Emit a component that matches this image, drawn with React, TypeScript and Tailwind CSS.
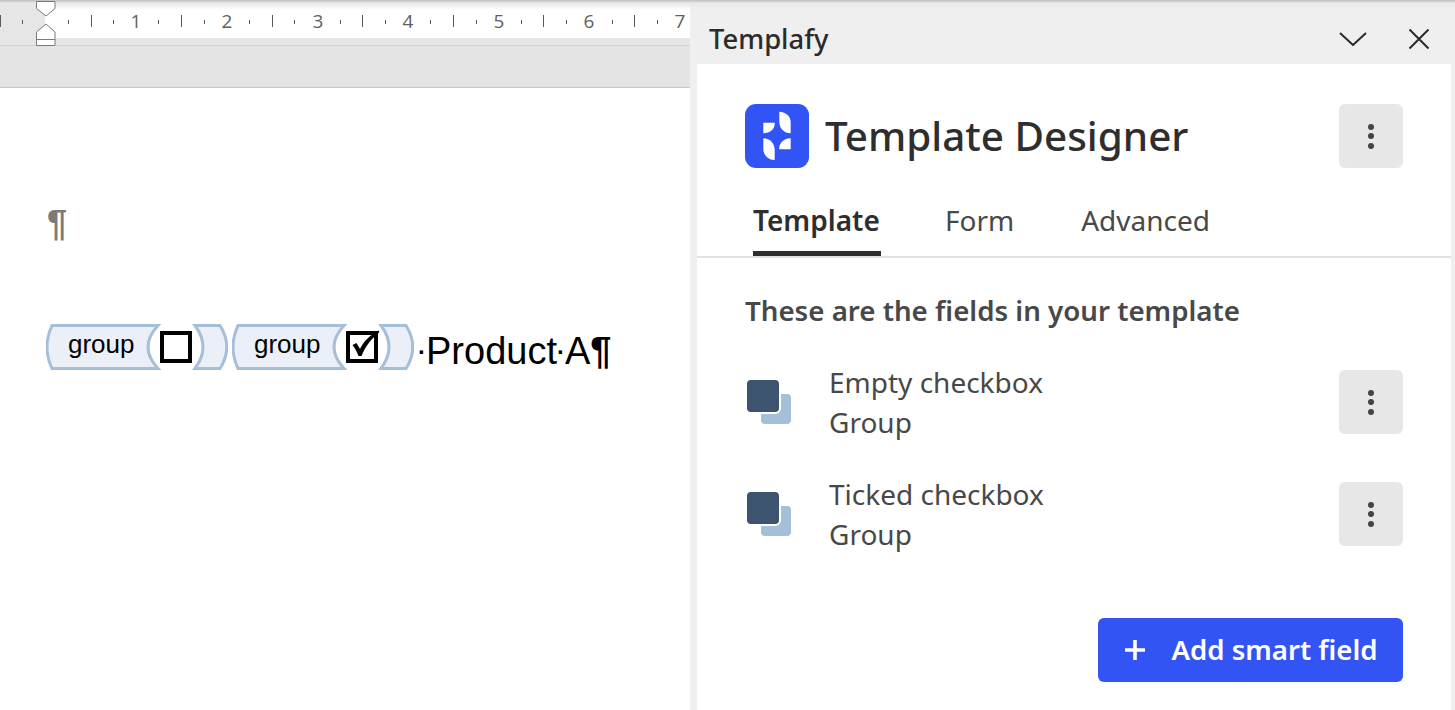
const minorTicks = [22, 68, 113, 158, 204, 249, 294, 340, 385, 430, 476, 521, 566, 612, 657];
const majorTicks = [0, 91, 181, 272, 362, 453, 543, 634];
const rulerDigits = [
  { x: 136, label: "1" },
  { x: 227, label: "2" },
  { x: 318, label: "3" },
  { x: 408, label: "4" },
  { x: 499, label: "5" },
  { x: 589, label: "6" },
  { x: 680, label: "7" }
];

function Ruler() {
  return (
    <div className="relative h-[46px] border-b border-[#d4d4d4] bg-[#e6e6e6]">
      <svg width="690" height="45" viewBox="0 0 690 45" className="block">
        <rect x="45" y="0" width="645" height="38" fill="#ffffff" />
        {minorTicks.map((x) => (
          <rect key={x} x={x} y="20" width="1" height="4" fill="#5a5a5a" />
        ))}
        {majorTicks.map((x) => (
          <rect key={x} x={x} y="15" width="1" height="12" fill="#5a5a5a" />
        ))}
        {rulerDigits.map((digit) => (
          <text key={digit.label} x={digit.x} y="28" textAnchor="middle" fontSize="19" fill="#5f5f5f" fontFamily="'Open Sans', sans-serif">
            {digit.label}
          </text>
        ))}
      </svg>
      {/* indent markers sit on top of the window shadow */}
      <svg width="21" height="46" viewBox="0 0 21 46" className="absolute left-[35px] top-0 z-10">
        <path d="M1.5 1.5H20V8.5L11 16L1.5 8.5Z" fill="#ffffff" stroke="#7a7a7a" />
        <path d="M1.5 32L11 24L20 32V45.5H1.5Z" fill="#ffffff" stroke="#7a7a7a" />
        <path d="M1.5 39.5H20" stroke="#7a7a7a" />
      </svg>
    </div>
  );
}

function CheckMark() {
  return (
    <svg width="36" height="34" viewBox="0 0 36 34" className="block">
      <rect x="3" y="3" width="28" height="28" fill="#ffffff" stroke="#000000" strokeWidth="4" />
      <path d="M7.5 15L11.5 13L15 19C19 11 25 5 33.5 0.5L34.5 2C26 9 20 17 16.5 26H13.5C12 22 10 18 7.5 15Z" fill="#000000" />
    </svg>
  );
}

function GroupTag({ ticked }: { ticked: boolean }) {
  return (
    <div className="relative h-[46px] w-[182px] shrink-0">
      <svg width="182" height="46" viewBox="0 0 182 46" className="absolute inset-0">
        <path d="M6 1.5Q-4 23 6 44.5H112Q92 23 112 1.5Z" fill="#ebf0f8" stroke="#a5bfd8" strokeWidth="3" />
        <path d="M149 1.5H174Q187.5 23 174 44.5H149Q165 23 149 1.5Z" fill="#ebf0f8" stroke="#a5bfd8" strokeWidth="3" />
      </svg>
      <div className="relative flex h-full items-center pl-[22px] font-['Liberation_Sans',sans-serif] text-[26px] leading-none text-black">
        <span className="mb-[6px] w-[91px]">group</span>
        <div className="size-[34px]">
          {ticked ? (
            <CheckMark />
          ) : (
            <div className="size-[34px] p-[1px]">
              <div className="size-[32px] border-4 border-black bg-white" />
            </div>
          )}
        </div>
      </div>
    </div>
  );
}

function Document() {
  return (
    <div className="flex-1 bg-white pl-[46px] pt-[112px] font-['Liberation_Sans',sans-serif]">
      <p className="h-[48px] pl-[1px] text-[36px] font-bold leading-[48px] text-[#7a7a7a]">¶</p>
      <div className="mt-[76px] flex items-center gap-[4px]">
        <GroupTag ticked={false} />
        <GroupTag ticked />
        <span className="mt-[7px] whitespace-nowrap text-[38px] leading-none text-black">
          <span className="align-[4px] text-[24px] font-bold">·</span>Product<span className="align-[4px] text-[24px] font-bold">·</span>A<span className="font-bold">¶</span>
        </span>
      </div>
    </div>
  );
}

function KebabButton() {
  return (
    <button className="flex size-[64px] shrink-0 flex-col items-center justify-center gap-[3.5px] rounded-[6px] bg-[#e7e7e7]">
      <span className="size-[6px] rounded-full bg-[#444444]" />
      <span className="size-[6px] rounded-full bg-[#444444]" />
      <span className="size-[6px] rounded-full bg-[#444444]" />
    </button>
  );
}

function GroupIcon() {
  return (
    <svg width="46" height="46" viewBox="0 0 46 46" className="shrink-0">
      <rect x="16" y="16" width="30" height="30" rx="4" fill="#a5bfd8" />
      <rect x="0" y="0" width="36" height="36" rx="6" fill="#ffffff" />
      <rect x="2" y="2" width="32" height="32" rx="4" fill="#3d5470" />
    </svg>
  );
}

function FieldRow({ name }: { name: string }) {
  return (
    <div className="flex h-[64px] items-center">
      <div className="-mt-[2px]">
        <GroupIcon />
      </div>
      <div className="ml-[38px] flex-1 text-[28px] leading-[40px] text-[#484848]">
        <p className="whitespace-nowrap">{name}</p>
        <p>Group</p>
      </div>
      <KebabButton />
    </div>
  );
}

function Panel() {
  return (
    <aside className="flex w-[765px] flex-col bg-[#efefef] pl-[7px] pr-[4px] font-['Noto_Sans',sans-serif]">
      <header className="flex h-[64px] shrink-0 items-center justify-between pl-[12px] pr-[21px] pt-[14px]">
        <span className="text-[27.4px] font-medium leading-none text-[#2b2b2b]">Templafy</span>
        <div className="flex items-center gap-[41px]">
          <svg width="28" height="14" viewBox="0 0 28 14">
            <path d="M1 1L14 13L27 1" fill="none" stroke="#2b2b2b" strokeWidth="2" />
          </svg>
          <svg width="22" height="22" viewBox="0 0 22 22">
            <path d="M1.5 1.5L20.5 20.5M20.5 1.5L1.5 20.5" fill="none" stroke="#2b2b2b" strokeWidth="2" />
          </svg>
        </div>
      </header>

      <main className="flex-1 bg-white">
        <div className="flex items-center justify-between px-[48px] pt-[40px]">
          <div className="flex items-center gap-[16px]">
            <svg width="64" height="64" viewBox="0 0 64 64" className="shrink-0">
              <rect width="64" height="64" rx="11" fill="#3354f4" />
              <path d="M34.3 7.7C41 7.7 45.7 13 45.7 18V29.3C39 29.3 34.3 24 34.3 18Z" fill="#ffffff" />
              <path d="M18.3 34.3C25 34.3 29.7 40 29.7 46V56C23 56 18.3 51 18.3 45Z" fill="#ffffff" />
              <path d="M18.3 18.7H29.7V20C29.7 25 25 29.3 18.3 29.3Z" fill="#ffffff" />
              <path d="M45.7 34.3V45.3H34.3V44C34.3 39 39 34.3 45.7 34.3Z" fill="#ffffff" />
            </svg>
            <h1 className="whitespace-nowrap text-[40.4px] font-medium leading-none text-[#2e2e2e]">Template Designer</h1>
          </div>
          <KebabButton />
        </div>

        <nav className="mt-[26px] flex h-[64px] gap-[64px] border-b-2 border-[#e1e1e1] pl-[56px] text-[28px] leading-[52px] text-[#484848]">
          <span className="h-[62px] w-[128px] border-b-[5px] border-[#2e2e2e] font-semibold text-[#2e2e2e]">Template</span>
          <span>Form</span>
          <span className="ml-[3px]">Advanced</span>
        </nav>

        <div className="px-[48px] pt-[32px]">
          <h2 className="text-[27.7px] font-semibold leading-[40px] text-[#484848]">These are the fields in your template</h2>
          <div className="mt-[40px] flex flex-col gap-[48px]">
            <FieldRow name="Empty checkbox" />
            <FieldRow name="Ticked checkbox" />
          </div>
          <div className="mt-[72px] flex justify-end">
            <button className="flex h-[64px] w-[305px] items-center justify-center gap-[24px] rounded-[6px] bg-[#3354f4] text-[27.6px] font-semibold text-white">
              <svg width="24" height="24" viewBox="0 0 24 24">
                <path d="M12 2V22M2 12H22" fill="none" stroke="#ffffff" strokeWidth="3.6" />
              </svg>
              Add smart field
            </button>
          </div>
        </div>
      </main>
    </aside>
  );
}

export default function App() {
  return (
    <div className="relative flex h-[710px] w-[1455px] overflow-hidden bg-white">
      <div className="flex w-[690px] shrink-0 flex-col">
        <Ruler />
        <div className="h-[42px] border-b border-[#c8c8c8] bg-[#e4e4e4]" />
        <Document />
      </div>
      <Panel />
      <div className="pointer-events-none absolute inset-x-0 top-0 h-[10px] bg-gradient-to-b from-[#bdbdbd] via-[#e8e8e8] via-30% to-transparent" />
    </div>
  );
}
